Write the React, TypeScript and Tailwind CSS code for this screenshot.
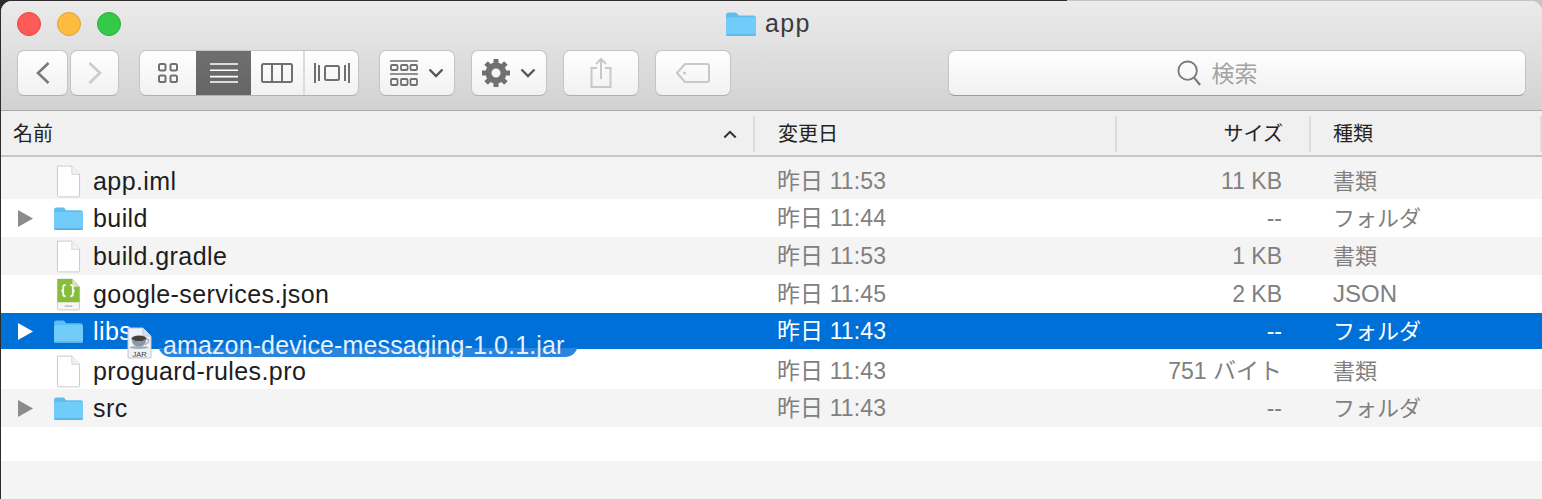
const FONT = "font-['Liberation_Sans','Noto_Sans_CJK_JP',sans-serif]";

const Folder = ({ className = "w-[31px] h-[25px]" }: { className?: string }) => (
  <svg viewBox="0 0 32 26" className={className}>
    <path d="M1 4 Q1 1.5 3.5 1.5 L10 1.5 Q11.5 1.5 12.5 3 L13.5 4.5 L28.5 4.5 Q31 4.5 31 7 L31 23 Q31 25 29 25 L3 25 Q1 25 1 23 Z" fill="#5fbdf1" />
    <path d="M1 8 Q1 6.2 3 6.2 L29 6.2 Q31 6.2 31 8 L31 23 Q31 25 29 25 L3 25 Q1 25 1 23 Z" fill="#72ccfa" />
    <path d="M1.5 24 L30.5 24" stroke="#4ba8e2" strokeWidth="1.2" />
  </svg>
);

const Doc = () => (
  <svg viewBox="0 0 26 34" className="w-[25px] h-[33px]">
    <path d="M1.5 1 L16.5 1 L24.5 9.5 L24.5 32 Q24.5 33 23.5 33 L2.5 33 Q1.5 33 1.5 32 Z" fill="#ffffff" stroke="#c9c9c9" />
    <path d="M16.5 1 L16.5 9.5 L24.5 9.5" fill="#f3f3f3" stroke="#d2d2d2" />
  </svg>
);

const JsonDoc = () => (
  <svg viewBox="0 0 26 34" className="w-[25px] h-[33px]">
    <path d="M1.5 1 L17 1 L24.5 9 L24.5 32 Q24.5 33 23.5 33 L2.5 33 Q1.5 33 1.5 32 Z" fill="#f7f7f7" stroke="#c9c9c9" />
    <path d="M1.5 1 L17 1 L24.5 9 L24.5 25 L1.5 25 Z" fill="#86bd3a" />
    <path d="M17 1 L17 9 L24.5 9 Z" fill="#d6e8b8" />
    <path d="M10 7 Q7.5 7 7.5 9.5 L7.5 11.5 Q7.5 13 5.5 13 Q7.5 13 7.5 14.5 L7.5 16.5 Q7.5 19 10 19 M15 7 Q17.5 7 17.5 9.5 L17.5 11.5 Q17.5 13 19.5 13 Q17.5 13 17.5 14.5 L17.5 16.5 Q17.5 19 15 19" fill="none" stroke="#ffffff" strokeWidth="1.9" />
    <path d="M9 29 L17 29" stroke="#b5b5b5" strokeWidth="1.4" />
  </svg>
);

const JarDoc = () => (
  <svg viewBox="0 0 25 32" className="w-[25px] h-[32px]">
    <path d="M1 1 L16 1 L24 9 L24 31 L1 31 Z" fill="#eef1f6" stroke="#c0c6d0" />
    <path d="M16 1 L16 9 L24 9" fill="#d9dfe9" stroke="#c0c6d0" />
    <ellipse cx="12" cy="11.5" rx="7.5" ry="3" fill="#45403c" />
    <path d="M4.5 11.5 Q5 19.5 12 19.5 Q19 19.5 19.5 11.5 Q16 14.5 12 14.5 Q8 14.5 4.5 11.5 Z" fill="#8b97a6" />
    <path d="M19 12 Q23 12 21 15.5 Q20 17 17.5 17.5" fill="none" stroke="#9aa5b3" strokeWidth="1.2" />
    <ellipse cx="12" cy="20.5" rx="9.5" ry="1.5" fill="#a3adb9" />
    <text x="12.5" y="29.5" textAnchor="middle" fontSize="7.5" fontFamily="'Liberation Sans', sans-serif" fill="#3c3c3c">JAR</text>
  </svg>
);

const Tri = ({ white }: { white?: boolean }) => (
  <svg viewBox="0 0 15 17" className="w-[15px] h-[17px]">
    <path d="M0 0 L15 8.5 L0 17 Z" fill={white ? "#ffffff" : "#8c8c8c"} />
  </svg>
);

const Btn = ({ w, children }: { w: string; children: React.ReactNode }) => (
  <div className={`${w} h-[46px] flex items-center justify-center rounded-[7px] border border-[#c4c4c4] border-b-[#b0b0b0] bg-gradient-to-b from-white to-[#f1f1f1]`}>
    {children}
  </div>
);

const Row = ({
  name, date, size, kind, icon, tri, bg, sel, h = "h-[38px]",
}: any) => (
  <div className={`${h} ${bg} flex items-center text-[23px] ${sel ? "text-white" : "text-[#808080]"}`}>
    <div className="w-[18px] ml-[17px] flex">{tri && <Tri white={sel} />}</div>
    <div className="w-[34px] ml-[15px] flex justify-center">{icon}</div>
    <div className={`w-[684px] ml-[8px] pt-[2px] text-[25px] tracking-[0.42px] ${sel ? "text-white" : "text-[#1d1d1d]"}`}>{name}</div>
    <div className="w-[341px] tracking-[0.1px]">{date}</div>
    <div className="w-[164px] text-right">{size}</div>
    <div className="ml-[51px] text-[22px]">{kind}</div>
  </div>
);

export default function App() {
  return (
    <div className={`${FONT} w-[1542px] h-[499px] overflow-hidden bg-[linear-gradient(to_right,#2c2c2c_1067px,#c4c4c4_1067px)] pt-[1px] pl-[1px]`}>
      <div className="h-[498px] rounded-t-[11px] overflow-hidden bg-white relative">
        {/* toolbar */}
        <div className="h-[109px] bg-gradient-to-b from-[#ebebeb] to-[#d2d2d2] border-b border-[#a9a9a9] box-content">
          <div className="h-[46px] pl-[16px] flex items-center">
            <div className="flex gap-[16px]">
              <div className="w-[24px] h-[24px] rounded-full bg-[#fc5b57] border border-[#e5453f]" />
              <div className="w-[24px] h-[24px] rounded-full bg-[#fdbc40] border border-[#e0a032]" />
              <div className="w-[24px] h-[24px] rounded-full bg-[#35c94a] border border-[#2aab3a]" />
            </div>
            <Folder className="ml-[604px] w-[32px] h-[26px]" />
            <span className="ml-[8px] text-[25px] tracking-[1.4px] text-[#3a3a3a]">app</span>
          </div>
          <div className="pl-[16px] pr-[16px] pt-[3px] flex items-start">
            <div className="flex gap-[2px]">
              <Btn w="w-[51px]">
                <svg viewBox="0 0 16 24" className="w-[16px] h-[24px]"><path d="M13.5 2 L3 12 L13.5 22" fill="none" stroke="#7a7a7a" strokeWidth="2.6" /></svg>
              </Btn>
              <Btn w="w-[49px]">
                <svg viewBox="0 0 16 24" className="w-[16px] h-[24px]"><path d="M2.5 2 L13 12 L2.5 22" fill="none" stroke="#cbcbcb" strokeWidth="2.6" /></svg>
              </Btn>
            </div>
            <div className="ml-[20px] w-[220px] h-[46px] flex rounded-[7px] overflow-hidden border border-[#c4c4c4] border-b-[#b0b0b0] bg-gradient-to-b from-white to-[#f1f1f1]">
              <div className="w-[56px] flex items-center justify-center">
                <svg viewBox="0 0 20 20" className="w-[20px] h-[20px]">
                  <g fill="none" stroke="#707070" strokeWidth="2">
                    <rect x="1" y="1" width="6.5" height="6.5" rx="1.5" />
                    <rect x="12.5" y="1" width="6.5" height="6.5" rx="1.5" />
                    <rect x="1" y="12.5" width="6.5" height="6.5" rx="1.5" />
                    <rect x="12.5" y="12.5" width="6.5" height="6.5" rx="1.5" />
                  </g>
                </svg>
              </div>
              <div className="w-[55px] -my-[1px] flex items-center justify-center bg-gradient-to-b from-[#6f6f6f] to-[#656565]">
                <svg viewBox="0 0 28 20" className="w-[28px] h-[20px]">
                  <path d="M0 1 H28 M0 7.3 H28 M0 13.6 H28 M0 19 H28" stroke="#ffffff" strokeWidth="1.6" />
                </svg>
              </div>
              <div className="w-[54px] border-r-2 border-[#dcdcdc] flex items-center justify-center">
                <svg viewBox="0 0 32 20" className="w-[32px] h-[20px]">
                  <rect x="1" y="1" width="30" height="18" rx="1.5" fill="none" stroke="#707070" strokeWidth="2" />
                  <path d="M11 1 V19 M21 1 V19" stroke="#707070" strokeWidth="2" />
                </svg>
              </div>
              <div className="flex-1 flex items-center justify-center">
                <svg viewBox="0 0 36 20" className="w-[36px] h-[20px]">
                  <rect x="11" y="3" width="14" height="14" rx="1.5" fill="none" stroke="#707070" strokeWidth="2" />
                  <path d="M1 0 V20 M5 2 V18 M35 0 V20 M31 2 V18" stroke="#707070" strokeWidth="2" />
                </svg>
              </div>
            </div>
            <div className="ml-[20px]">
              <Btn w="w-[76px]">
                <svg viewBox="0 0 28 26" className="w-[28px] h-[26px]">
                  <path d="M0 1 H28 M0 14 H28" stroke="#707070" strokeWidth="1.6" />
                  <g fill="none" stroke="#707070" strokeWidth="1.8">
                    <rect x="1" y="5" width="6.5" height="5" rx="1" /><rect x="11" y="5" width="6.5" height="5" rx="1" /><rect x="20.5" y="5" width="6.5" height="5" rx="1" />
                    <rect x="1" y="19" width="6.5" height="6" rx="1" /><rect x="11" y="19" width="6.5" height="6" rx="1" /><rect x="20.5" y="19" width="6.5" height="6" rx="1" />
                  </g>
                </svg>
                <svg viewBox="0 0 16 10" className="ml-[10px] w-[16px] h-[10px]"><path d="M1.5 1.5 L8 8 L14.5 1.5" fill="none" stroke="#555555" strokeWidth="2.4" /></svg>
              </Btn>
            </div>
            <div className="ml-[16px]">
              <Btn w="w-[76px]">
                <svg viewBox="0 0 28 28" className="w-[28px] h-[28px]">
                  <circle cx="14" cy="14" r="7.5" fill="none" stroke="#707070" strokeWidth="6" />
                  <path d="M14 0 V6 M14 22 V28 M0 14 H6 M22 14 H28 M4.1 4.1 L8.3 8.3 M19.7 19.7 L23.9 23.9 M23.9 4.1 L19.7 8.3 M8.3 19.7 L4.1 23.9" stroke="#707070" strokeWidth="5" />
                </svg>
                <svg viewBox="0 0 16 10" className="ml-[10px] w-[16px] h-[10px]"><path d="M1.5 1.5 L8 8 L14.5 1.5" fill="none" stroke="#555555" strokeWidth="2.4" /></svg>
              </Btn>
            </div>
            <div className="ml-[16px]">
              <Btn w="w-[76px]">
                <svg viewBox="0 0 22 30" className="w-[22px] h-[30px]">
                  <path d="M7 10 H1.5 V29 H20.5 V10 H15 M11 21 V1.5 M6 6 L11 1 L16 6" fill="none" stroke="#c8c8c8" strokeWidth="2" />
                </svg>
              </Btn>
            </div>
            <div className="ml-[16px]">
              <Btn w="w-[76px]">
                <svg viewBox="0 0 34 20" className="w-[34px] h-[20px]">
                  <path d="M9 1 H31 Q33 1 33 3 V17 Q33 19 31 19 H9 L1 10 Z" fill="none" stroke="#c8c8c8" strokeWidth="2" />
                  <circle cx="8.5" cy="10" r="1.6" fill="#c8c8c8" />
                </svg>
              </Btn>
            </div>
            <div className="ml-auto w-[578px] h-[46px] pr-[40px] flex items-center justify-center rounded-[7px] border border-[#c4c4c4] border-b-[#9a9a9a] bg-gradient-to-b from-white to-[#f1f1f1]">
              <svg viewBox="0 0 26 28" className="w-[24px] h-[26px]">
                <circle cx="11.5" cy="11.5" r="10" fill="none" stroke="#7a7a7a" strokeWidth="2" />
                <path d="M18.5 19 L25 27" stroke="#7a7a7a" strokeWidth="2.4" />
              </svg>
              <span className="ml-[11px] mt-[2px] text-[23px] text-[#a3a3a3]">検索</span>
            </div>
          </div>
        </div>

        {/* column header */}
        <div className="h-[46px] pt-[2px] bg-[#f0f0f0] border-b-2 border-[#c6c6c6] flex items-center text-[20px] text-[#222222]">
          <div className="w-[754px] h-[36px] pl-[12px] pr-[16px] flex items-center justify-between border-r-2 border-[#dcdcdc]">
            <span>名前</span>
            <svg viewBox="0 0 16 10" className="w-[14px] h-[9px]"><path d="M1.5 8.5 L8 2 L14.5 8.5" fill="none" stroke="#333333" strokeWidth="2.4" /></svg>
          </div>
          <div className="w-[362px] h-[36px] pl-[23px] flex items-center border-r-2 border-[#dcdcdc]">変更日</div>
          <div className="w-[194px] h-[36px] pr-[26px] flex items-center justify-end border-r-2 border-[#dcdcdc]">サイズ</div>
          <div className="flex-1 h-[36px] pl-[22px] flex items-center border-r-2 border-[#dcdcdc]">種類</div>
        </div>

        {/* rows */}
        <div className="relative">
          <Row h="h-[42px] pt-[6px]" bg="bg-[#f4f4f4]" name="app.iml" date="昨日 11:53" size="11 KB" kind="書類" icon={<Doc />} />
          <Row bg="bg-white" tri name="build" date="昨日 11:44" size="--" kind="フォルダ" icon={<Folder />} />
          <Row bg="bg-[#f4f4f4]" name="build.gradle" date="昨日 11:53" size="1 KB" kind="書類" icon={<Doc />} />
          <Row bg="bg-white" name="google-services.json" date="昨日 11:45" size="2 KB" kind={<span className="text-[24px]">JSON</span>} icon={<JsonDoc />} />
          <Row h="h-[36px]" bg="bg-[#0070d9]" sel tri name="libs" date="昨日 11:43" size="--" kind="フォルダ" icon={<Folder />} />
          <Row h="h-[40px] pt-[4px]" bg="bg-white" name="proguard-rules.pro" date="昨日 11:43" size="751 バイト" kind="書類" icon={<Doc />} />
          <Row bg="bg-[#f4f4f4]" tri name="src" date="昨日 11:43" size="--" kind="フォルダ" icon={<Folder />} />
          <div className="h-[34px] bg-white" />
          <div className="h-[38px] bg-[#f4f4f4]" />

          {/* drag ghost */}
          <div className="absolute left-[126px] top-[170px] flex items-start">
            <JarDoc />
            <div className="ml-[6px] mt-[3px] h-[27px] w-[420px] pl-[5px] pt-[2px] rounded-b-[13px] bg-[linear-gradient(to_bottom,#0070d9_0,#0070d9_18px,#2a85de_18px)] text-[25px] leading-[27px] tracking-[0.12px] text-[#e6f1fb]">
              amazon-device-messaging-1.0.1.jar
            </div>
          </div>
        </div>
      </div>
    </div>
  );
}
